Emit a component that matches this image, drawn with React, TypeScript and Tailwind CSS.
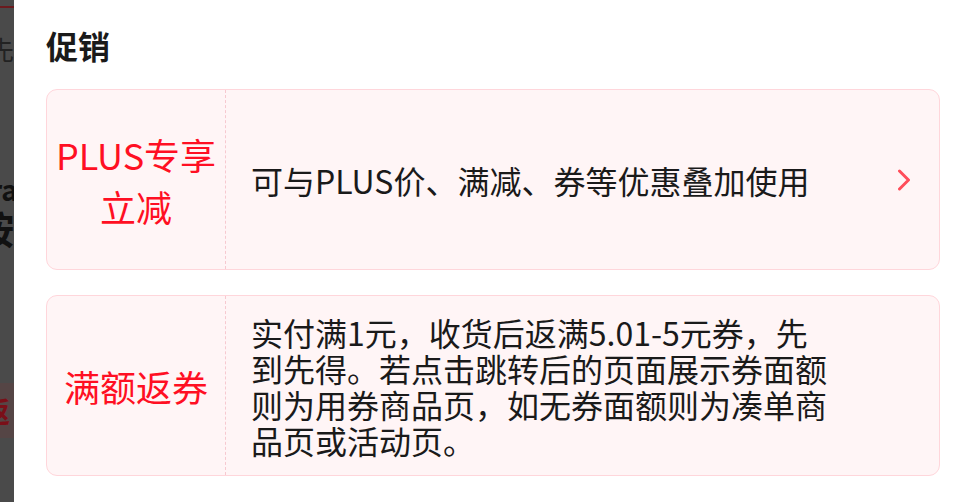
const FONT = { fontFamily: '"Noto Sans CJK SC", "Noto Sans", sans-serif' }

function Chevron() {
  return (
    <svg width="14" height="22" viewBox="0 0 14 22" fill="none" stroke="#ff4d5a" strokeWidth="3" strokeLinecap="round" strokeLinejoin="round">
      <path d="M2.5 2 L11.5 11 L2.5 20" />
    </svg>
  )
}

function PromoCard({
  label,
  lines,
  arrow,
}: {
  label: string[]
  lines: string[]
  arrow?: boolean
}) {
  return (
    <div className="flex h-[181px] overflow-hidden rounded-[11px] border border-[#ffd6db] bg-[#fff5f6]">
      <div className="flex w-[179px] shrink-0 flex-col items-center justify-center border-r border-dashed border-[#f7c9d0] text-[36px] leading-[52px] text-[#ff0f23]">
        {label.map((l) => (
          <span key={l} className="whitespace-nowrap">
            {l}
          </span>
        ))}
      </div>
      <div className="flex min-w-0 flex-1 flex-col justify-center pl-[25px] text-[32px] leading-[36px] text-[#1a1a1a]">
        {lines.map((l) => (
          <span key={l} className="whitespace-nowrap">
            {l}
          </span>
        ))}
      </div>
      {arrow && (
        <div className="mr-[28px] flex items-center">
          <Chevron />
        </div>
      )}
    </div>
  )
}

export default function App() {
  return (
    <div className="flex h-[502px] w-[967px] overflow-hidden bg-white" style={FONT}>
      {/* page behind the mask */}
      <div className="flex w-[14px] shrink-0 flex-col overflow-hidden bg-[#4a4a4a]">
        <div className="mt-[6px] h-[2px] w-full bg-[#6b1a1e]" />
        <span className="mt-[26px] ml-[-12px] whitespace-nowrap text-[26px] leading-[30px] text-[#222]">先论</span>
        <span className="mt-[110px] ml-[-10px] whitespace-nowrap text-[28px] font-bold leading-[30px] text-[#111]">ra</span>
        <span className="mt-[2px] ml-[-24px] whitespace-nowrap text-[38px] font-bold leading-[44px] text-[#111]">按</span>
        <div className="mt-[133px] flex h-[55px] items-center bg-[#554545]">
          <span className="ml-[-18px] whitespace-nowrap text-[28px] font-bold text-[#7a0f18]">返</span>
        </div>
      </div>

      <div className="flex flex-1 flex-col pl-[32px] pr-[27px]">
        <h2 className="mt-[25px] text-[32px] font-bold leading-[40px] text-[#1a1a1a]">促销</h2>
        <div className="mt-[24px] flex flex-col gap-[25px]">
          <PromoCard label={['PLUS专享', '立减']} lines={['可与PLUS价、满减、券等优惠叠加使用']} arrow />
          <PromoCard
            label={['满额返券']}
            lines={[
              '实付满1元，收货后返满5.01-5元券，先',
              '到先得。若点击跳转后的页面展示券面额',
              '则为用券商品页，如无券面额则为凑单商',
              '品页或活动页。',
            ]}
          />
        </div>
      </div>
    </div>
  )
}
